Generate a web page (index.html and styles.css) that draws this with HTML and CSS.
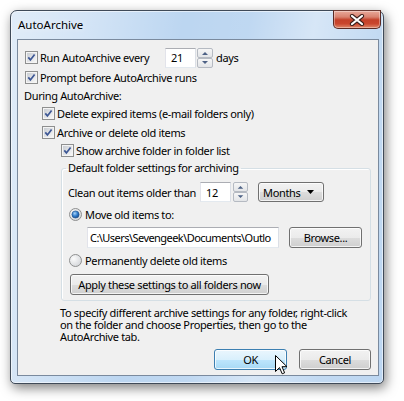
FILE: index.html
```html
<!DOCTYPE html>
<html>
<head>
<meta charset="utf-8">
<link rel="stylesheet" href="styles.css">
</head>
<body>
<svg class="defs" width="0" height="0" aria-hidden="true">
  <defs>
    <linearGradient id="cbg" x1="0" y1="0" x2="1" y2="1">
      <stop offset="0" stop-color="#c9cdd3"/>
      <stop offset="1" stop-color="#f7f7f7"/>
    </linearGradient>
    <radialGradient id="rbg" cx="0.35" cy="0.35" r="0.8">
      <stop offset="0" stop-color="#fbfbfb"/>
      <stop offset="1" stop-color="#cfd2d6"/>
    </radialGradient>
    <radialGradient id="rdot" cx="0.4" cy="0.35" r="0.75">
      <stop offset="0" stop-color="#a8d3f7"/>
      <stop offset="0.5" stop-color="#2f7ccc"/>
      <stop offset="1" stop-color="#143f7a"/>
    </radialGradient>
    <symbol id="chk" viewBox="0 0 13 13">
      <rect x="0.5" y="0.5" width="12" height="12" fill="#f4f4f4" stroke="#8e8f8f"/>
      <rect x="2" y="2" width="9" height="9" fill="url(#cbg)"/>
      <path d="M3.3 6.4 L5.4 8.9 L9.6 3.4" fill="none" stroke="#3d5795" stroke-width="1.7"/>
    </symbol>
    <symbol id="radoff" viewBox="0 0 13 13">
      <circle cx="6.5" cy="6.5" r="6" fill="url(#rbg)" stroke="#8e8f8f"/>
    </symbol>
    <symbol id="radon" viewBox="0 0 13 13">
      <circle cx="6.5" cy="6.5" r="6" fill="url(#rbg)" stroke="#8e8f8f"/>
      <circle cx="6.5" cy="6.5" r="3.6" fill="url(#rdot)" stroke="#1d4f8a" stroke-width="0.6"/>
    </symbol>
    <symbol id="up" viewBox="0 0 14 8">
      <path d="M4 6 L7 3 L10 6 Z" fill="#4d6185"/>
    </symbol>
    <symbol id="down" viewBox="0 0 14 8">
      <path d="M4 2 L7 5 L10 2 Z" fill="#4d6185"/>
    </symbol>
  </defs>
</svg>

<div class="window">
  <div class="titlebar">
    <span class="title">AutoArchive</span>
    <div class="close">
      <svg width="16" height="12" viewBox="0 0 16 12">
        <path d="M3 2 L13 10 M13 2 L3 10" stroke="#3b1f1b" stroke-width="4.2" stroke-linecap="round"/>
        <path d="M3 2 L13 10 M13 2 L3 10" stroke="#ffffff" stroke-width="2.2" stroke-linecap="round"/>
      </svg>
    </div>
  </div>

  <div class="client">
    <div class="row r1 ind0">
      <svg class="cb"><use href="#chk"/></svg>
      <span class="lbl lbl-run">Run AutoArchive every</span>
      <div class="tb num">21</div>
      <div class="spinb">
        <div class="sb"><svg class="arr"><use href="#up"/></svg></div>
        <div class="sb"><svg class="arr"><use href="#down"/></svg></div>
      </div>
      <span class="days">days</span>
    </div>
    <div class="row r2 ind0">
      <svg class="cb"><use href="#chk"/></svg>
      <span class="lbl">Prompt before AutoArchive runs</span>
    </div>
    <div class="row r3 txt0">During AutoArchive:</div>
    <div class="row r4 ind1">
      <svg class="cb"><use href="#chk"/></svg>
      <span class="lbl">Delete expired items (e-mail folders only)</span>
    </div>
    <div class="row r5 ind1">
      <svg class="cb"><use href="#chk"/></svg>
      <span class="lbl">Archive or delete old items</span>
    </div>
    <div class="row r6 ind2">
      <svg class="cb"><use href="#chk"/></svg>
      <span class="lbl">Show archive folder in folder list</span>
    </div>

    <fieldset class="group">
      <legend>Default folder settings for archiving</legend>
      <div class="row g1">
        <span class="lbl-clean">Clean out items older than</span>
        <div class="tb num">12</div>
        <div class="spinb small">
          <div class="sb"><svg class="arr"><use href="#up"/></svg></div>
          <div class="sb"><svg class="arr"><use href="#down"/></svg></div>
        </div>
        <div class="combo">
          <span>Months</span>
          <svg width="8" height="5" viewBox="0 0 8 5"><path d="M0 0 H7 L3.5 4 Z" fill="#000"/></svg>
        </div>
      </div>
      <div class="row g2">
        <svg class="rb"><use href="#radon"/></svg>
        <span class="rlbl">Move old items to:</span>
      </div>
      <div class="row g3">
        <div class="tb path">C:\Users\Sevengeek\Documents\Outlo</div>
        <div class="btn browse">Browse...</div>
      </div>
      <div class="row g4">
        <svg class="rb"><use href="#radoff"/></svg>
        <span class="rlbl">Permanently delete old items</span>
      </div>
      <div class="row g5">
        <div class="btn apply">Apply these settings to all folders now</div>
      </div>
    </fieldset>

    <div class="note">
      <div class="line">To specify different archive settings for any folder, right-click</div>
      <div class="line">on the folder and choose Properties, then go to the</div>
      <div class="line">AutoArchive tab.</div>
    </div>

    <div class="row actions">
      <div class="btn ok">OK</div>
      <div class="btn cancel">Cancel</div>
    </div>
  </div>
</div>

<svg class="cursor" width="13" height="20" viewBox="0 0 13 20">
  <path d="M0.5 0.5 L0.5 16.5 L4.5 12.6 L7.2 18.8 L9.6 17.8 L7 11.7 L12 11.7 Z" fill="#fff" stroke="#000" stroke-width="1" stroke-linejoin="miter"/>
</svg>
</body>
</html>
```

FILE: styles.css
```css
html, body {
  margin: 0;
  padding: 0;
  background: #ffffff;
}

body {
  font-family: "Noto Sans", "Open Sans", sans-serif;
  font-size: 11px;
  letter-spacing: -0.35px;
  color: #000;
  position: relative;
  width: 404px;
  height: 401px;
  overflow: hidden;
  white-space: nowrap;
}

.defs {
  position: absolute;
  width: 0;
  height: 0;
}

.window {
  margin: 10px 0 0 10px;
  width: 374px;
  height: 374px;
  box-sizing: border-box;
  border: 1px solid #3f4a58;
  border-radius: 7px 7px 5px 5px;
  background:
    linear-gradient(100deg, rgba(255,255,255,0.55) 0%, rgba(255,255,255,0.35) 18%, rgba(255,255,255,0) 40%, rgba(255,255,255,0.05) 55%, rgba(255,255,255,0.4) 70%, rgba(255,255,255,0.1) 85%, rgba(255,255,255,0) 100%),
    #bcd6f1;
  box-shadow: inset 0 0 0 1px rgba(255,255,255,0.55), 2px 4px 12px rgba(0,0,0,0.5);
  display: flex;
  flex-direction: column;
}

.titlebar {
  height: 28px;
  display: flex;
  align-items: flex-start;
  justify-content: space-between;
  padding-left: 7px;
}

.title {
  align-self: center;
  font-size: 11.5px;
  letter-spacing: 0;
  color: #000;
  margin-top: -2px;
  text-shadow: 0 0 6px rgba(255,255,255,0.9);
}

.close {
  width: 48px;
  height: 19px;
  margin-top: -1px;
  margin-right: 2px;
  box-sizing: border-box;
  border: 1px solid #5a2a24;
  border-top-color: #6b3a33;
  border-radius: 0 0 5px 5px;
  background: linear-gradient(#e9a99a 0%, #d98370 35%, #c4412a 52%, #c9462e 75%, #e08a6c 100%);
  box-shadow: inset 0 0 0 1px rgba(255,255,255,0.35);
  display: flex;
  align-items: center;
  justify-content: center;
}

.client {
  flex: 1;
  margin: 0 4px 7px 6px;
  border: 1px solid #7a8a9e;
  background: #f0f0f0;
  padding-top: 7px;
}

.row {
  display: flex;
  align-items: center;
}

.cb {
  width: 13px;
  height: 13px;
  flex: none;
  margin-right: 2px;
}

.rb {
  width: 13px;
  height: 13px;
  flex: none;
  margin-right: 3px;
}

.r1 { height: 21px; }
.r2 { height: 18px; }
.r3 { height: 18px; }
.r4 { height: 19px; }
.r5 { height: 18px; }
.r6 { height: 19px; }

.ind0 { padding-left: 7px; }
.txt0 { padding-left: 6px; }
.ind1 { padding-left: 24px; }
.ind2 { padding-left: 43px; }

.lbl-run {
  width: 125px;
  flex: none;
}

.tb {
  box-sizing: border-box;
  height: 20px;
  border: 1px solid;
  border-color: #abadb3 #dbdfe6 #e3e9ef #e2e3ea;
  background: #fff;
  display: flex;
  align-items: center;
  padding-left: 5px;
  flex: none;
}

.num {
  width: 31px;
}

.spinb {
  width: 16px;
  height: 20px;
  margin-left: 1px;
  display: flex;
  flex-direction: column;
  flex: none;
}

.spinb.small {
  width: 15px;
  margin-left: 2px;
}

.sb {
  flex: 1;
  box-sizing: border-box;
  border: 1px solid #b5bac2;
  border-radius: 2px;
  background: linear-gradient(#f6f6f6, #e3e5e8);
  display: flex;
  align-items: center;
  justify-content: center;
}

.arr {
  width: 14px;
  height: 8px;
}

.days {
  margin-left: 3px;
}

.group {
  margin: 0 7px 0 43px;
  padding: 0 0 5px 6px;
  border: 1px solid #d5dfe5;
  border-radius: 3px;
  box-shadow: inset 1px 1px 0 #fff;
}

.group legend {
  padding: 0 2px;
  margin-left: -2px;
  line-height: 16px;
  height: 16px;
}

.g1 { height: 20px; margin-top: 6px; }
.g2 { height: 20px; margin-top: 2px; padding-left: 1px; }
.g3 { height: 21px; margin-top: 3px; padding-left: 19px; }
.g4 { height: 19px; margin-top: 3px; padding-left: 1px; }
.g5 { height: 21px; margin-top: 4px; padding-left: 2px; }

.lbl-clean {
  width: 132px;
  flex: none;
}

.combo {
  margin-left: 10px;
  width: 66px;
  height: 20px;
  box-sizing: border-box;
  border: 1px solid #707070;
  border-radius: 3px;
  background: linear-gradient(#f2f2f2 0%, #ebebeb 50%, #dddddd 51%, #cfcfcf 100%);
  box-shadow: inset 0 0 0 1px rgba(255,255,255,0.75);
  display: flex;
  align-items: center;
  justify-content: space-between;
  padding: 0 8px 0 4px;
  flex: none;
}

.path {
  width: 192px;
  height: 21px;
  padding-left: 2px;
  letter-spacing: -0.55px;
  overflow: hidden;
}

.btn {
  box-sizing: border-box;
  height: 21px;
  border: 1px solid #707070;
  border-radius: 3px;
  background: linear-gradient(#f2f2f2 0%, #ebebeb 50%, #dddddd 51%, #cfcfcf 100%);
  box-shadow: inset 0 0 0 1px rgba(255,255,255,0.75);
  display: flex;
  align-items: center;
  justify-content: center;
  flex: none;
}

.browse {
  width: 73px;
  margin-left: 10px;
}

.apply {
  width: 199px;
}

.note {
  margin: 6px 0 0 42px;
}

.note .line {
  height: 12px;
  line-height: 12px;
}

.actions {
  margin-top: 6px;
  justify-content: flex-end;
  padding-right: 7px;
  gap: 12px;
}

.ok {
  width: 73px;
  border-color: #3c7fb1;
  background: linear-gradient(#eaf6fd 0%, #d9f0fc 50%, #bee6fd 51%, #a7d9f5 100%);
}

.cancel {
  width: 72px;
}

.cursor {
  position: absolute;
  left: 275px;
  top: 355px;
}
```
